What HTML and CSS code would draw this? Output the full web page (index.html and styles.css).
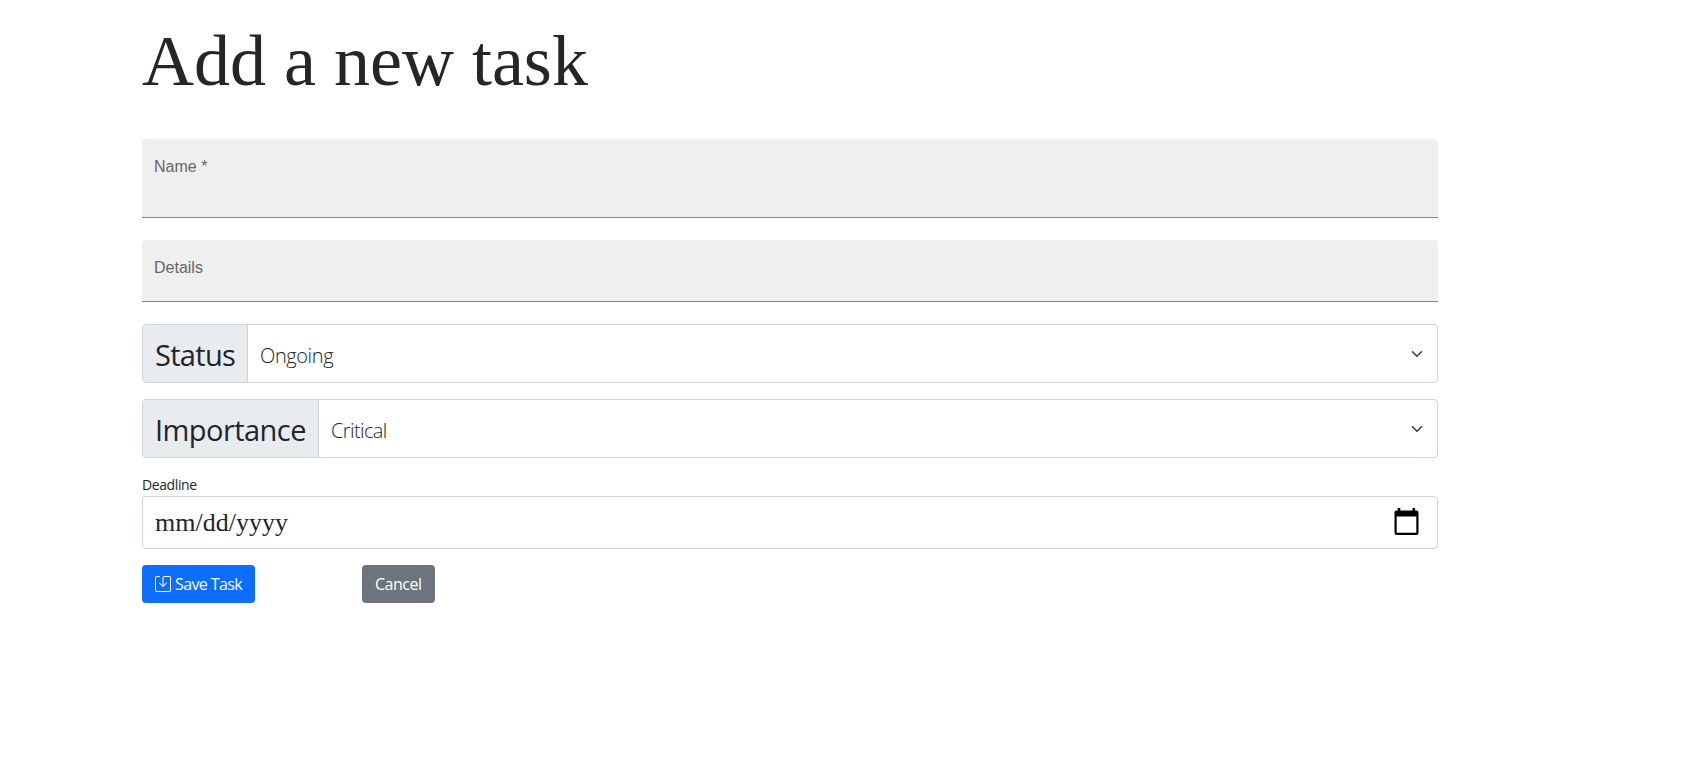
FILE: index.html
```html
<!DOCTYPE html>
<html lang="en">
<head>
<meta charset="utf-8">
<title>Add a new task</title>
<link rel="stylesheet" href="styles.css">
</head>
<body>
<main class="container">
  <h1 class="title">Add a new task</h1>
  <form class="task-form">
    <div class="field field-name"><span class="field-label">Name *</span></div>
    <div class="field field-details"><span class="field-label">Details</span></div>
    <div class="group group-status">
      <div class="addon"><span class="status-text">Status</span></div>
      <div class="select"><span class="ongoing-text">Ongoing</span>
        <svg class="chevron" viewBox="0 0 16 16"><path d="M2 5l6 6 6-6" fill="none" stroke="#343a40" stroke-width="2" stroke-linecap="round" stroke-linejoin="round"/></svg>
      </div>
    </div>
    <div class="group group-importance">
      <div class="addon"><span class="importance-text">Importance</span></div>
      <div class="select"><span class="critical-text">Critical</span>
        <svg class="chevron" viewBox="0 0 16 16"><path d="M2 5l6 6 6-6" fill="none" stroke="#343a40" stroke-width="2" stroke-linecap="round" stroke-linejoin="round"/></svg>
      </div>
    </div>
    <div class="deadline-label">Deadline</div>
    <div class="date"><span class="date-text">mm/dd/yyyy</span>
      <svg class="calendar" viewBox="0 0 25 27"><path fill="#000" fill-rule="evenodd" d="M3.700 0h2.600v2.500h12.200V0h2.600v2.500h1.400A2 2 0 0 1 24.500 4.500V25a2 2 0 0 1-2 2h-20a2 2 0 0 1-2-2V4.500a2 2 0 0 1 2-2h1.200zM2.700 8.500v16.300h19.600v-16.300z"/></svg>
    </div>
    <div class="actions">
      <button type="button" class="btn btn-save"><svg class="save-icon" viewBox="0 0 16 16" fill="#fff"><path d="M2 1a1 1 0 0 0-1 1v12a1 1 0 0 0 1 1h12a1 1 0 0 0 1-1V2a1 1 0 0 0-1-1H9.500a1 1 0 0 0-1 1v7.293l2.646-2.647a.5.5 0 0 1 .708.708l-3.500 3.500a.5.5 0 0 1-.708 0l-3.500-3.500a.5.5 0 1 1 .708-.708L7.500 9.293V2a2 2 0 0 1 2-2H14a2 2 0 0 1 2 2v12a2 2 0 0 1-2 2H2a2 2 0 0 1-2-2V2a2 2 0 0 1 2-2h2.500a.5.5 0 0 1 0 1H2z"/></svg><span class="save-text">Save Task</span></button>
      <button type="button" class="btn btn-cancel"><span class="cancel-text">Cancel</span></button>
    </div>
  </form>
</main>
</body>
</html>
```
FILE: styles.css
```css
* { box-sizing: border-box; }
body {
  margin: 0;
  background: #fff;
  color: #212529;
  font-family: "Open Sans", "Noto Sans", sans-serif;
}
.container { width: 1296px; margin-left: 142px; }
.title {
  margin: 0;
  height: 139px;
  padding-top: 20px;
  font: 400 72px/82px "Liberation Serif", serif;
  color: #262626;
}
.task-form { display: flex; flex-direction: column; }
.field {
  padding: 17px 12px 0;
  background: #efefef;
  border-bottom: 1px solid #868686;
  border-radius: 4px 4px 0 0;
  font: 16px/20px "Liberation Sans", sans-serif;
  color: #666;
}
.field-label { display: block; padding-top: 1px; }
.field-name { height: 79px; margin-bottom: 22px; }
.field-details { height: 62px; margin-bottom: 22px; }
.group {
  display: flex;
  height: 59px;
  margin-bottom: 16px;
  border: 1px solid #ced4da;
  border-radius: 4px;
  overflow: hidden;
}
.addon {
  flex: none;
  display: flex;
  align-items: center;
  padding: 2px 0 0 12px;
  background: #e9ecef;
  font-size: 29px;
  line-height: 40px;
  white-space: nowrap;
  border-right: 1px solid #ced4da;
}
.group-status .addon { width: 105px; }
.group-importance .addon { width: 176px; }
.status-text { letter-spacing: -0.7px; }
.importance-text { letter-spacing: -0.55px; }
.select {
  flex: 1;
  display: flex;
  align-items: center;
  justify-content: space-between;
  padding: 0 12px;
  font-size: 20px;
  font-weight: 300;
  line-height: 30px;
}
.ongoing-text { padding-top: 4px; letter-spacing: -0.4px; }
.critical-text { padding-top: 4px; letter-spacing: -0.6px; }
.chevron { width: 12px; height: 12px; margin-right: 2px; }
.deadline-label {
  height: 22px;
  font-size: 14px;
  line-height: 22px;
  letter-spacing: -0.4px;
}
.date {
  display: flex;
  align-items: center;
  justify-content: space-between;
  height: 53px;
  padding: 0 18px 0 12px;
  border: 1px solid #ced4da;
  border-radius: 4px;
  font: 26px/39px "Liberation Serif", serif;
}
.calendar { width: 25px; height: 27px; margin-bottom: 2px; }
.actions { display: flex; gap: 107px; margin-top: 16px; }
.btn {
  display: flex;
  align-items: center;
  height: 38px;
  padding: 0 0 0 13px;
  border: 0;
  border-radius: 4px;
  color: #fff;
  font: 16px/24px "Open Sans", sans-serif;
  white-space: nowrap;
}
.btn-save { width: 113px; gap: 4px; background: #0d6efd; }
.btn-cancel { width: 73px; background: #6c757d; }
.save-icon { flex: none; width: 16px; height: 16px; }
.save-text { letter-spacing: -0.6px; }
.cancel-text { letter-spacing: -0.5px; }
```
